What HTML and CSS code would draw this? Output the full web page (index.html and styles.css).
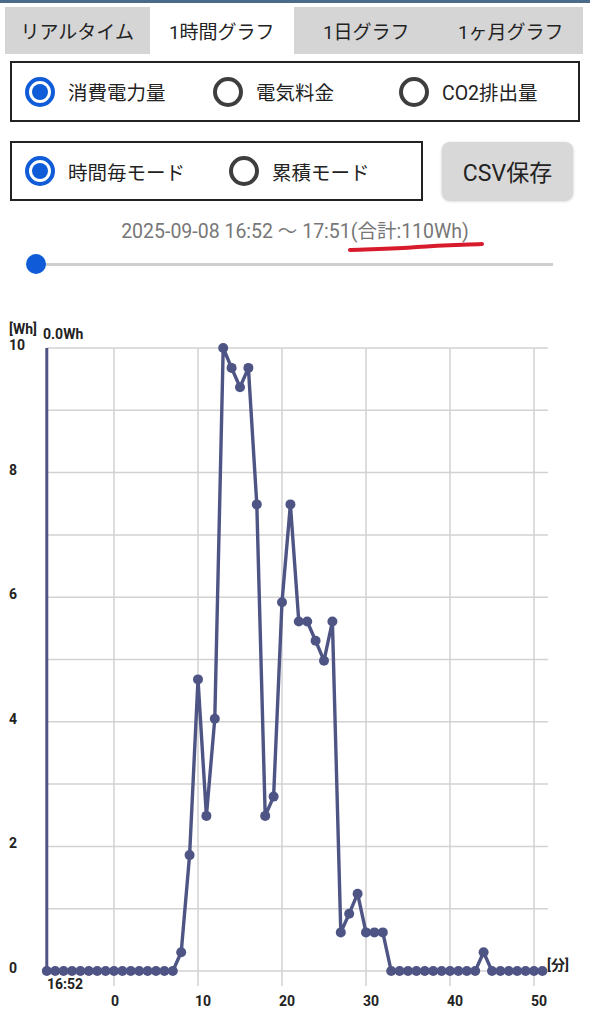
FILE: index.html
```html
<!DOCTYPE html>
<html>
	<head>
		<meta charset="utf-8">
		<title>1時間グラフ</title>
		<link rel="stylesheet" href="styles.css">
	</head>
	<body>
		<div class="topline"></div>
		<div class="tabs">
			<div class="tab">リアルタイム</div>
			<div class="tab active">1時間グラフ</div>
			<div class="tab">1日グラフ</div>
			<div class="tab">1ヶ月グラフ</div>
		</div>
		<div class="panel kind">
			<label class="opt"><span class="radio on"></span>消費電力量</label>
			<label class="opt"><span class="radio"></span>電気料金</label>
			<label class="opt"><span class="radio"></span>CO2排出量</label>
		</div>
		<div class="row">
			<div class="panel mode">
				<label class="opt"><span class="radio on"></span>時間毎モード</label>
				<label class="opt"><span class="radio"></span>累積モード</label>
			</div>
			<button class="csv">CSV保存</button>
		</div>
		<div class="range">
			<span>2025-09-08 16:52 〜 17:51(合計:110Wh)</span>
			<svg class="mark" width="140" height="14" viewBox="0 0 140 14">
				<path d="M3 10 C 25 9, 45 9, 70 7 S 110 5, 135 4" />
			</svg>
		</div>
		<div class="slider">
			<div class="track"></div>
			<div class="thumb"></div>
		</div>
		<svg id="chart" class="chart" width="590" height="724" viewBox="0 300 590 724"></svg>
		<script type="text/javascript">
			// 1分毎の電力量 (16:52 から 60 点)
			var vals = [0,0,0,0,0,0,0,0,0,0,0,0,0,0,0,0,
				0.3,1.86,4.68,2.49,4.05,10,9.68,9.37,9.68,7.49,2.49,2.8,5.92,7.49,
				5.61,5.61,5.3,4.98,5.61,0.62,0.92,1.24,0.62,0.62,0.62,
				0,0,0,0,0,0,0,0,0,0,0,0.3,0,0,0,0,0,0,0];
			var svg = document.getElementById("chart");
			function X(m) { return 114 + 8.4 * m; }
			function Y(v) { return 971 - 62.3 * v; }
			var html = "";
			// グリッド
			for (var k = 0; k <= 10; k++) {
				html += '<line class="grid" x1="47" x2="548" y1="' + Y(k) + '" y2="' + Y(k) + '"/>';
			}
			for (var k = 0; k <= 5; k++) {
				var gx = X(k * 10);
				html += '<line class="grid" x1="' + gx + '" x2="' + gx + '" y1="348" y2="986"/>';
				html += '<text x="' + (gx - 3) + '" y="1006">' + (k * 10) + '</text>';
			}
			for (var k = 0; k <= 10; k += 2) {
				html += '<text x="9" y="' + (Y(k) + 2) + '">' + k + '</text>';
			}
			html += '<text x="9" y="334">[Wh]</text>';
			html += '<text x="43" y="339">0.0Wh</text>';
			html += '<text x="47" y="989">16:52</text>';
			html += '<text x="547" y="970">[分]</text>';
			// カーソル線
			html += '<line class="cursor" x1="46.8" x2="46.8" y1="348" y2="971"/>';
			var pts = [];
			for (var i = 0; i < vals.length; i++) {
				pts.push(X(i - 8).toFixed(1) + "," + Y(vals[i]).toFixed(1));
			}
			html += '<polyline class="series" points="' + pts.join(" ") + '"/>';
			for (var i = 0; i < vals.length; i++) {
				html += '<circle class="dot" cx="' + X(i - 8).toFixed(1) + '" cy="' + Y(vals[i]).toFixed(1) + '" r="5"/>';
			}
			svg.innerHTML = html;
		</script>
	</body>
</html>
```

FILE: styles.css
```css
*{margin: 0;padding: 0;box-sizing: border-box;}
html,
body{width: 100%;height: 100%;overflow: hidden;background-color: #fff;}
body{font-family: Roboto, "Noto Sans CJK JP", sans-serif;color: #222;}

.topline{height: 3px;background-color: #4a6b8c;}

.tabs{display: flex;height: 47px;margin: 4px 7px 0 5px;}
.tab{flex: 1;display: flex;align-items: center;justify-content: center;
	background-color: #d5d5d5;font-size: 19px;color: #222;}
.tab.active{background-color: #fff;}

.panel{border: 2px solid #222;display: grid;align-items: center;padding-left: 13px;}
.kind{height: 61px;margin: 7px 10px 0;grid-template-columns: 188px 186px auto;}
.mode{width: 413px;height: 60px;grid-template-columns: 204px auto;}

.opt{display: flex;align-items: center;font-size: 19.5px;color: #222;}
.radio{width: 30px;height: 30px;border-radius: 50%;border: 4px solid #3e3e3e;
	margin-right: 13px;position: relative;flex: none;}
.radio.on{border-color: #0f5bd8;}
.radio.on::after{content: "";position: absolute;left: 3px;top: 3px;width: 16px;height: 16px;
	border-radius: 50%;background-color: #0f5bd8;}

.row{display: flex;align-items: flex-start;margin: 19px 0 0 10px;height: 68px;}
.csv{margin: 1px 0 0 19px;width: 131px;height: 58px;border: none;border-radius: 8px;
	background-color: #d8d8d8;box-shadow: 0 1px 3px rgba(0,0,0,0.25);
	font-family: Roboto, "Noto Sans CJK JP", sans-serif;font-size: 23px;color: #222;}

.range{position: relative;height: 24px;margin-top: 11px;text-align: center;
	font-size: 19.5px;line-height: 24px;color: #777;}
.mark{position: absolute;left: 347px;top: 20px;}
.mark path{fill: none;stroke: #d81b2c;stroke-width: 4;stroke-linecap: round;}

.slider{position: relative;height: 40px;margin: 0 37px 0 36px;display: flex;align-items: center;}
.track{flex: 1;height: 3px;background-color: #cfcfcf;}
.thumb{position: absolute;left: -10px;top: 10px;width: 20px;height: 20px;border-radius: 50%;
	background-color: #0f5bd8;}

.chart{display: block;margin-top: 16px;}
.chart text{font-family: Roboto, "Noto Sans CJK JP", sans-serif;font-size: 14px;font-weight: bold;fill: #222;}
.chart .grid{stroke: #d2d2d2;stroke-width: 1.5;}
.chart .cursor{stroke: #4e5585;stroke-width: 3;}
.chart .series{fill: none;stroke: #4e5585;stroke-width: 3.4;stroke-linejoin: round;}
.chart .dot{fill: #4e5585;}
```
